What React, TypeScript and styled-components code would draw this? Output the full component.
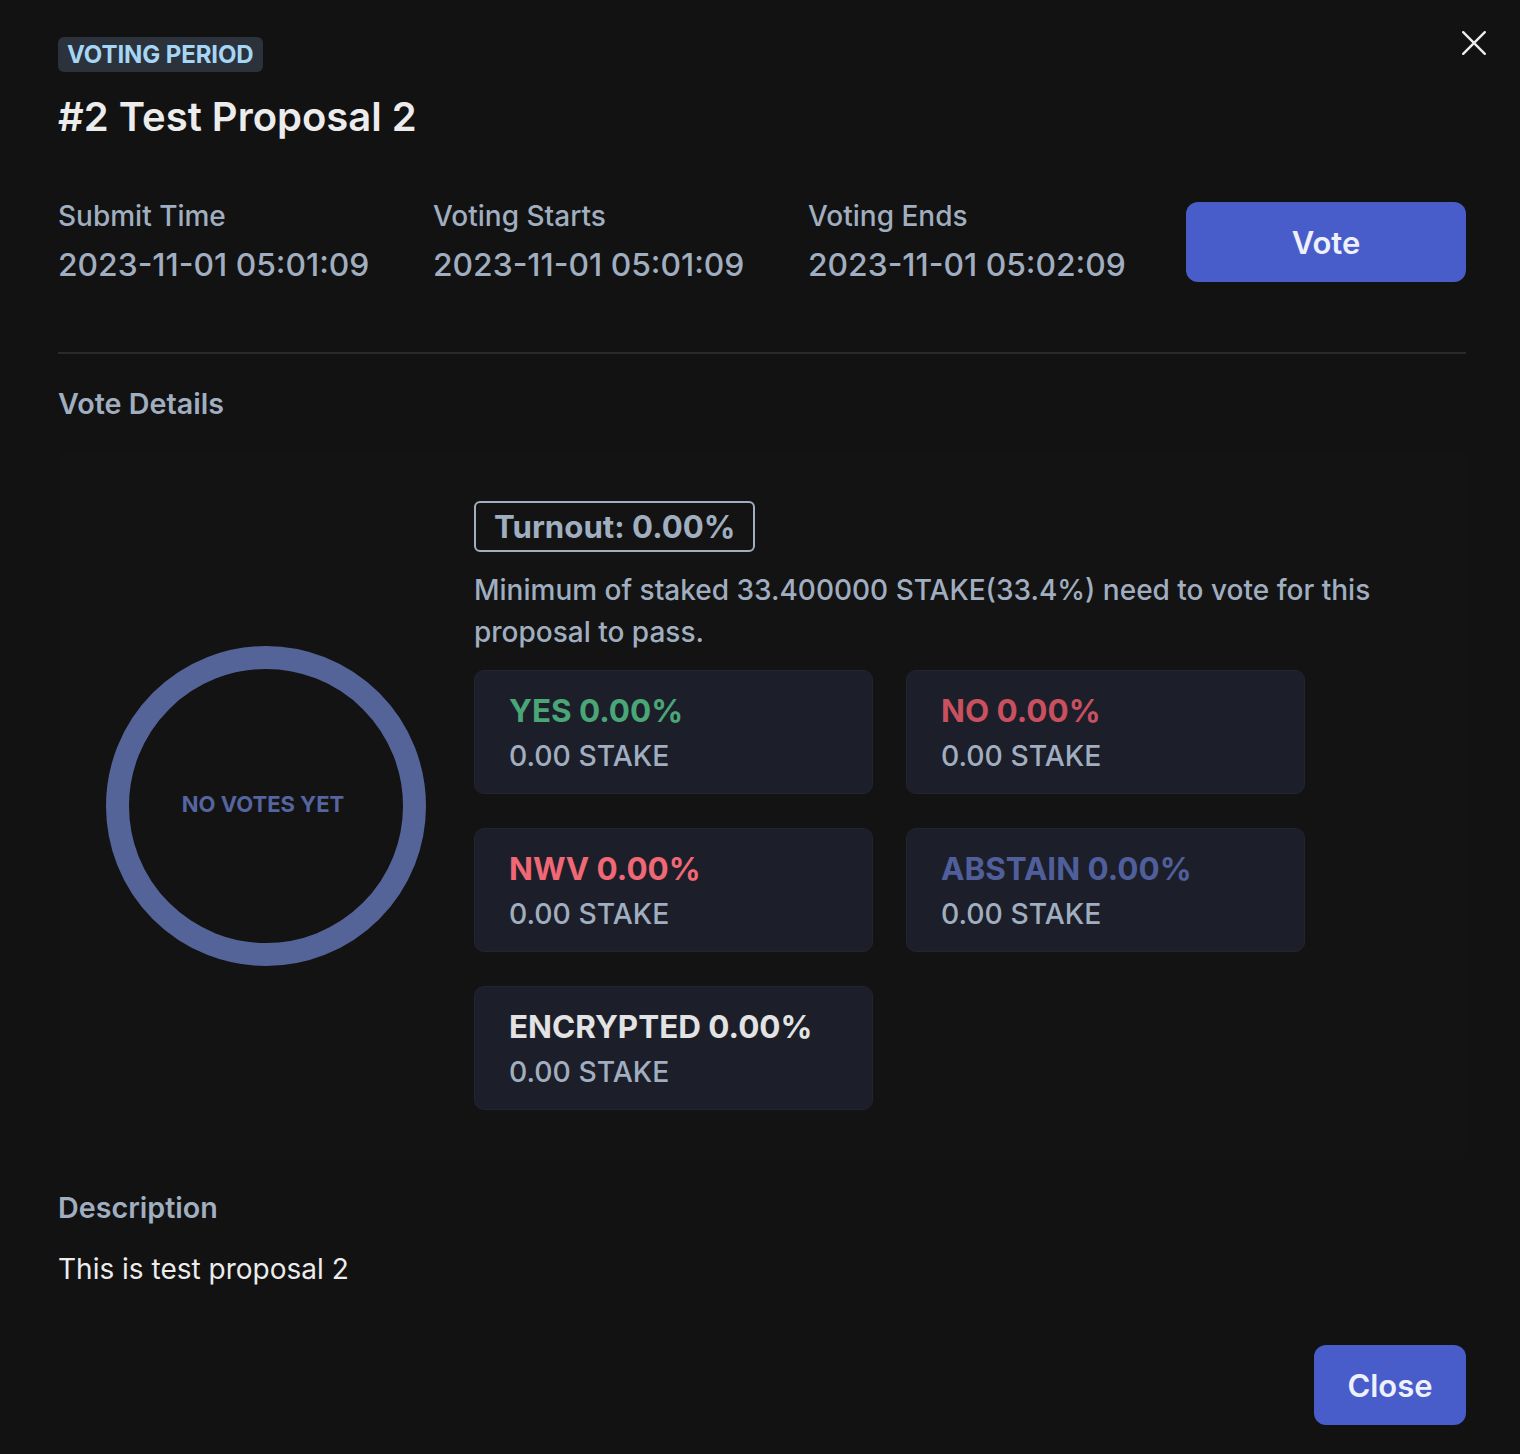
import React from "react";
import styled, { createGlobalStyle } from "styled-components";

const Global = createGlobalStyle`
  html, body { margin: 0; padding: 0; background: #121212; }
  body { font-family: Inter, "Noto Sans", sans-serif; color: #ececec; }
  * { box-sizing: border-box; }
`;

const Modal = styled.div`
  position: relative;
  width: 1520px;
  min-height: 1454px;
  background: #121212;
  padding: 37px 54px 29px 58px;
  display: flex;
  flex-direction: column;
`;

const CloseIcon = styled.button`
  position: absolute;
  top: 29px;
  right: 32px;
  width: 28px;
  height: 28px;
  padding: 0;
  border: none;
  background: transparent;
  color: #ededed;
  display: flex;
  align-items: center;
  justify-content: center;
  cursor: pointer;
`;

const Badge = styled.span`
  align-self: flex-start;
  height: 35px;
  line-height: 35px;
  padding: 0 9px;
  border-radius: 6px;
  background: #2c323b;
  color: #a6d6f6;
  font-size: 24px;
  font-weight: 700;
  letter-spacing: -0.1px;
`;

const Title = styled.h1`
  margin: 22px 0 0;
  font-size: 40px;
  line-height: 46px;
  font-weight: 600;
  color: #ececec;
`;

const InfoRow = styled.div`
  margin-top: 60px;
  display: flex;
  align-items: center;
`;

const InfoItem = styled.div`
  width: 375px;
  display: flex;
  flex-direction: column;
  gap: 14px;
`;

const InfoLabel = styled.div`
  font-size: 28px;
  line-height: 32px;
  font-weight: 500;
  color: #a0aec0;
`;

const InfoValue = styled.div`
  font-size: 31.8px;
  line-height: 38px;
  font-weight: 500;
  color: #a0aec0;
`;

const PrimaryButton = styled.button<{ $width: number }>`
  width: ${(p) => p.$width}px;
  height: 80px;
  border: none;
  border-radius: 12px;
  background: #485dca;
  color: #eef0fc;
  font-family: inherit;
  font-size: 31px;
  font-weight: 600;
  cursor: pointer;
`;

const VoteButton = styled(PrimaryButton)`
  margin-left: auto;
`;

const Divider = styled.hr`
  margin: 68px 0 0;
  border: none;
  height: 2px;
  background: #2a2a2a;
`;

const SectionTitle = styled.h2<{ $top: number }>`
  margin: ${(p) => p.$top}px 0 0;
  font-size: 28.7px;
  line-height: 36px;
  font-weight: 600;
  color: #a0aec0;
`;

const Panel = styled.div`
  margin-top: 31px;
  display: flex;
  align-items: center;
  padding: 48px 0 50px;
  background: #131313;
  border-radius: 6px;
`;

const ChartCol = styled.div`
  width: 416px;
  flex-shrink: 0;
  display: flex;
  justify-content: center;
  align-items: center;
`;

const Ring = styled.div`
  width: 320px;
  height: 320px;
  border-radius: 50%;
  border: 23px solid #546499;
  display: flex;
  align-items: center;
  justify-content: center;
  color: #5565a0;
  font-size: 22px;
  font-weight: 700;
  padding-right: 6px;
  padding-bottom: 4px;
`;

const StatsCol = styled.div`
  flex: 1;
  display: flex;
  flex-direction: column;
  align-items: flex-start;
`;

const Turnout = styled.div`
  height: 51px;
  padding: 0 18px;
  border: 2px solid #a0aec0;
  border-radius: 6px;
  display: flex;
  align-items: center;
  color: #a0aec0;
  font-size: 31.2px;
  font-weight: 700;
`;

const MinText = styled.p`
  margin: 17px 0 0;
  font-size: 28px;
  line-height: 42px;
  font-weight: 500;
  color: #a0aec0;
`;

const CardGrid = styled.div`
  margin-top: 17px;
  display: grid;
  grid-template-columns: 399px 399px;
  column-gap: 33px;
  row-gap: 34px;
`;

const Card = styled.div`
  height: 124px;
  padding: 20px 34px;
  background: #1c1f29;
  border: 1px solid #21252f;
  border-radius: 10px;
  display: flex;
  flex-direction: column;
  gap: 6px;
`;

const CardTitle = styled.div<{ $color: string }>`
  font-size: 31.4px;
  line-height: 40px;
  font-weight: 700;
  color: ${(p) => p.$color};
`;

const CardStake = styled.div`
  font-size: 28.3px;
  line-height: 38px;
  font-weight: 500;
  color: #a0aec0;
`;

const Description = styled.p`
  margin: 23px 0 0;
  font-size: 28px;
  line-height: 40px;
  font-weight: 400;
  color: #ececec;
`;

const Footer = styled.div`
  margin-top: 56px;
  display: flex;
  justify-content: flex-end;
`;

const stats = [
  { label: "YES", color: "#4aa677" },
  { label: "NO", color: "#c9505f" },
  { label: "NWV", color: "#f06875" },
  { label: "ABSTAIN", color: "#505f9b" },
  { label: "ENCRYPTED", color: "#e3e3e3" },
];

export default function App() {
  return (
    <>
      <Global />
      <Modal>
        <CloseIcon aria-label="Close">
          <svg width="26" height="26" viewBox="0 0 24 24" fill="none" stroke="currentColor" strokeWidth="2.2" strokeLinecap="round">
            <path d="M2 2 L22 22 M22 2 L2 22" />
          </svg>
        </CloseIcon>
        <Badge>VOTING PERIOD</Badge>
        <Title>#2 Test Proposal 2</Title>
        <InfoRow>
          <InfoItem>
            <InfoLabel>Submit Time</InfoLabel>
            <InfoValue>2023-11-01 05:01:09</InfoValue>
          </InfoItem>
          <InfoItem>
            <InfoLabel>Voting Starts</InfoLabel>
            <InfoValue>2023-11-01 05:01:09</InfoValue>
          </InfoItem>
          <InfoItem>
            <InfoLabel>Voting Ends</InfoLabel>
            <InfoValue>2023-11-01 05:02:09</InfoValue>
          </InfoItem>
          <VoteButton $width={280}>Vote</VoteButton>
        </InfoRow>
        <Divider />
        <SectionTitle $top={32}>Vote Details</SectionTitle>
        <Panel>
          <ChartCol>
            <Ring>NO VOTES YET</Ring>
          </ChartCol>
          <StatsCol>
            <Turnout>Turnout: 0.00%</Turnout>
            <MinText>
              Minimum of staked 33.400000 STAKE(33.4%) need to vote for this proposal to pass.
            </MinText>
            <CardGrid>
              {stats.map((s) => (
                <Card key={s.label}>
                  <CardTitle $color={s.color}>{s.label} 0.00%</CardTitle>
                  <CardStake>0.00 STAKE</CardStake>
                </Card>
              ))}
            </CardGrid>
          </StatsCol>
        </Panel>
        <SectionTitle $top={30}>Description</SectionTitle>
        <Description>This is test proposal 2</Description>
        <Footer>
          <PrimaryButton $width={152}>Close</PrimaryButton>
        </Footer>
      </Modal>
    </>
  );
}
